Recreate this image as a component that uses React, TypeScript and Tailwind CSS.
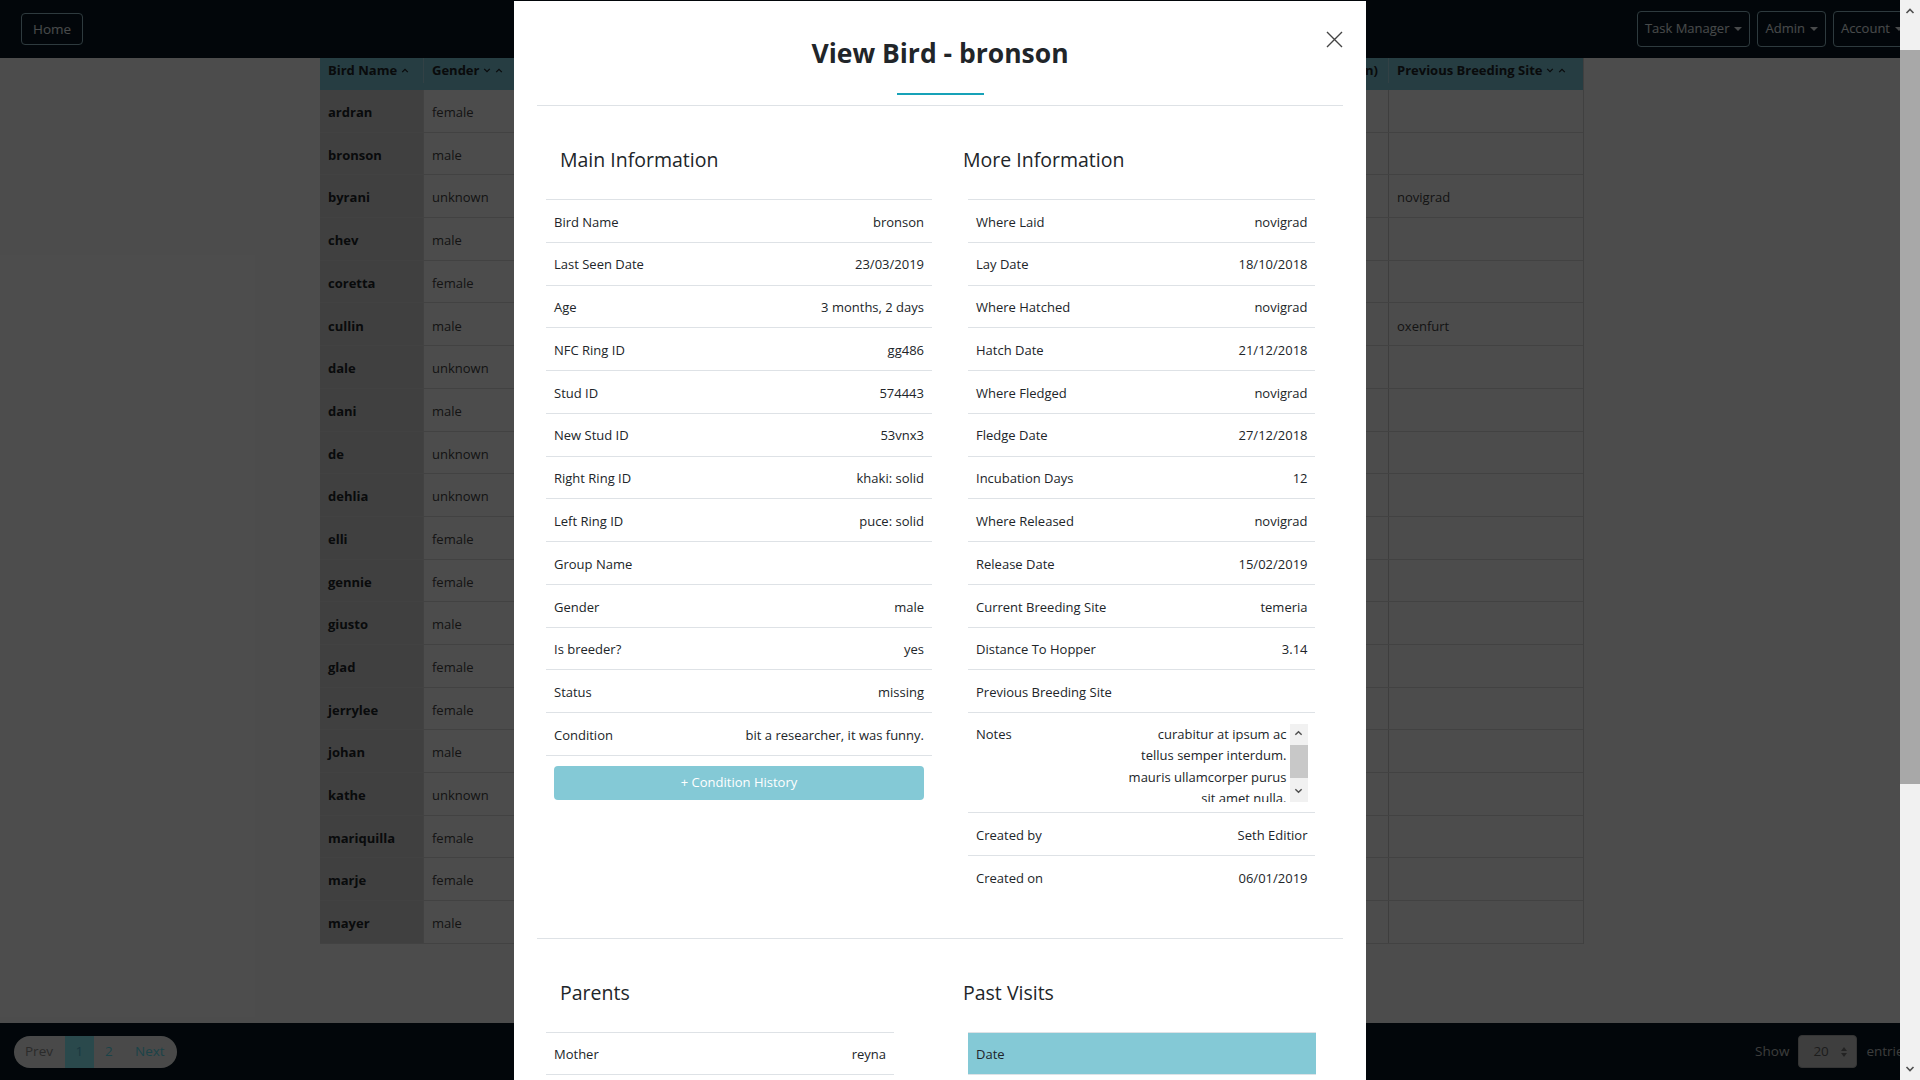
import React from 'react';

const birds: [string, string, string][] = [
  ['ardran', 'female', ''],
  ['bronson', 'male', ''],
  ['byrani', 'unknown', 'novigrad'],
  ['chev', 'male', ''],
  ['coretta', 'female', ''],
  ['cullin', 'male', 'oxenfurt'],
  ['dale', 'unknown', ''],
  ['dani', 'male', ''],
  ['de', 'unknown', ''],
  ['dehlia', 'unknown', ''],
  ['elli', 'female', ''],
  ['gennie', 'female', ''],
  ['giusto', 'male', ''],
  ['glad', 'female', ''],
  ['jerrylee', 'female', ''],
  ['johan', 'male', ''],
  ['kathe', 'unknown', ''],
  ['mariquilla', 'female', ''],
  ['marje', 'female', ''],
  ['mayer', 'male', ''],
];

const mainInfo: [string, string][] = [
  ['Bird Name', 'bronson'],
  ['Last Seen Date', '23/03/2019'],
  ['Age', '3 months, 2 days'],
  ['NFC Ring ID', 'gg486'],
  ['Stud ID', '574443'],
  ['New Stud ID', '53vnx3'],
  ['Right Ring ID', 'khaki: solid'],
  ['Left Ring ID', 'puce: solid'],
  ['Group Name', ''],
  ['Gender', 'male'],
  ['Is breeder?', 'yes'],
  ['Status', 'missing'],
  ['Condition', 'bit a researcher, it was funny.'],
];

const moreInfo: [string, string][] = [
  ['Where Laid', 'novigrad'],
  ['Lay Date', '18/10/2018'],
  ['Where Hatched', 'novigrad'],
  ['Hatch Date', '21/12/2018'],
  ['Where Fledged', 'novigrad'],
  ['Fledge Date', '27/12/2018'],
  ['Incubation Days', '12'],
  ['Where Released', 'novigrad'],
  ['Release Date', '15/02/2019'],
  ['Current Breeding Site', 'temeria'],
  ['Distance To Hopper', '3.14'],
  ['Previous Breeding Site', ''],
];

function Up({ className = '' }: { className?: string }) {
  return (
    <svg viewBox="0 0 10 6" className={className} fill="none" stroke="currentColor" strokeWidth="1.6">
      <path d="M1.5 5 L5 1.5 L8.5 5" />
    </svg>
  );
}

function Down({ className = '' }: { className?: string }) {
  return (
    <svg viewBox="0 0 10 6" className={className} fill="none" stroke="currentColor" strokeWidth="1.6">
      <path d="M1.5 1 L5 4.5 L8.5 1" />
    </svg>
  );
}

function Caret() {
  return <span className="ml-[5px] inline-block h-0 w-0 border-x-[4px] border-t-[4px] border-x-transparent border-t-current" />;
}

function NavButton({ label }: { label: string }) {
  return (
    <button className="flex h-[36px] items-center rounded-[4px] border border-[#9cc3cf] px-[7px] text-[13px] text-[#f2f8fa]">
      {label}
      <Caret />
    </button>
  );
}

export default function App() {
  return (
    <div className="flex h-[1080px] w-[1920px] overflow-hidden bg-white font-['Open_Sans','Noto_Sans',sans-serif] text-[13px] text-[#212529]">
      <div className="relative flex h-full flex-1 flex-col overflow-hidden">
        {/* navbar */}
        <nav className="flex h-[58px] shrink-0 items-center bg-[#071722] pl-[21px]">
          <button className="h-[32px] rounded-[4px] border border-[#9cc3cf] px-[11px] text-[13.5px] text-[#f2f8fa]">Home</button>
          <div className="mr-[-11px] ml-auto flex gap-[7px]">
            <NavButton label="Task Manager" />
            <NavButton label="Admin" />
            <NavButton label="Account" />
          </div>
        </nav>

        {/* birds table */}
        <main className="flex-1 pl-[320px]">
          <div className="w-[1264px] border-r border-[#d8d8d8]">
            <div className="grid h-[32px] grid-cols-[103px_110px_685px_170px_196px] bg-[#80cbdc] pb-[7px] font-bold">
              <div className="flex items-center gap-[4px] px-2">
                Bird Name <Up className="h-[5px] w-[8px]" />
              </div>
              <div className="flex items-center gap-[4px] border-l border-[#a9dbe6] px-2">
                Gender <Down className="h-[5px] w-[8px]" /> <Up className="h-[5px] w-[8px]" />
              </div>
              <div className="flex items-center border-l border-[#a9dbe6] px-2">Status</div>
              <div className="flex items-center justify-end border-l border-[#a9dbe6] pr-[10px]">Release Site (region)</div>
              <div className="flex items-center gap-[4px] border-l border-[#a9dbe6] px-2">
                Previous Breeding Site <Down className="h-[5px] w-[8px]" /> <Up className="h-[5px] w-[8px]" />
              </div>
            </div>
            {birds.map(([name, gender, prev]) => (
              <div key={name} className="grid h-[42.7px] grid-cols-[103px_110px_685px_170px_196px] border-b border-[#dcdcdc]">
                <div className="flex items-center bg-[#d6d6d6] px-2 pt-[4px] font-bold">{name}</div>
                <div className="flex items-center border-l border-[#dcdcdc] px-2 pt-[4px] text-[#444]">{gender}</div>
                <div className="border-l border-[#dcdcdc]" />
                <div className="border-l border-[#dcdcdc]" />
                <div className="flex items-center border-l border-[#d0d0d0] px-2 pt-[4px] text-[#444]">{prev}</div>
              </div>
            ))}
          </div>
        </main>

        {/* footer */}
        <footer className="flex h-[57px] shrink-0 items-center bg-[#071722] pl-[14px]">
          <div className="flex h-[32px] items-center overflow-hidden rounded-full bg-[#f5f5f5] text-[13.5px]">
            <span className="pr-[12px] pl-[11px] text-[#8f8f8f]">Prev</span>
            <span className="flex h-full w-[29px] items-center justify-center bg-[#8ef4ff] text-[#58bbd5]">1</span>
            <span className="flex h-full w-[30px] items-center justify-center text-[#5ee0f0]">2</span>
            <span className="pr-[12px] pl-[11px] text-[#5ee0f0]">Next</span>
          </div>
          <div className="mr-[-10px] ml-auto flex items-center text-[13.5px] text-[#c8c8c8]">
            <span>Show</span>
            <div className="mx-[9px] flex h-[33px] w-[59px] items-center justify-between rounded-[4px] border border-[#b0b0b0] bg-[#d0d0d0] pr-[9px] pl-[14px] text-[#626262]">
              20
              <span className="flex flex-col gap-[2px]">
                <span className="h-0 w-0 border-x-[3.5px] border-b-[4px] border-x-transparent border-b-[#777]" />
                <span className="h-0 w-0 border-x-[3.5px] border-t-[4px] border-x-transparent border-t-[#777]" />
              </span>
            </div>
            <span>entries</span>
          </div>
        </footer>

        {/* backdrop */}
        <div className="absolute inset-0 bg-black/70" />

        {/* modal */}
        <div className="absolute top-[1px] left-[514px] h-[1079px] w-[852px] overflow-hidden bg-white px-[23px]">
          <div className="relative border-b border-[#dee2e6] pb-[10px]">
            <h2 className="pt-[34px] text-center text-[26.5px] leading-[36px] font-bold text-[#212529]">View Bird - bronson</h2>
            <div className="mx-auto mt-[22px] h-[2px] w-[87px] bg-[#17a2b8]" />
            <button className="absolute top-[30px] right-0 text-[#444]">
              <svg width="17" height="17" viewBox="0 0 17 17" stroke="currentColor" strokeWidth="1.4" fill="none">
                <path d="M1 1 L16 16 M16 1 L1 16" />
              </svg>
            </button>
          </div>

          <div className="grid grid-cols-2 border-b border-[#dee2e6] pb-[40px]">
            <div className="pt-[41px]">
              <h3 className="pl-[23px] text-[19.5px] leading-[26px]">Main Information</h3>
              <div className="mt-[26px] mr-[8px] ml-[9px] border-b border-[#dee2e6]">
                {mainInfo.map(([label, value]) => (
                  <div key={label} className="flex h-[42.77px] items-center justify-between border-t border-[#dee2e6] pt-[3px] pr-[8px] pl-2">
                    <span>{label}</span>
                    <span>{value}</span>
                  </div>
                ))}
              </div>
              <button className="mt-[10px] ml-[17px] h-[34px] w-[370px] rounded-[4px] bg-[#84c9d6] text-[13px] text-white">
                + Condition History
              </button>
            </div>

            <div className="pt-[41px]">
              <h3 className="pl-[23px] text-[19.5px] leading-[26px]">More Information</h3>
              <div className="mt-[26px] mr-[28px] ml-[28px]">
                {moreInfo.map(([label, value]) => (
                  <div key={label} className="flex h-[42.77px] items-center justify-between border-t border-[#dee2e6] pt-[3px] pr-[7.5px] pl-2">
                    <span>{label}</span>
                    <span>{value}</span>
                  </div>
                ))}
                <div className="flex h-[100px] items-start justify-between border-t border-[#dee2e6] pt-[11px] pr-[7.5px] pl-2">
                  <span className="leading-[21px]">Notes</span>
                  <div className="flex h-[78px]">
                    <div className="overflow-hidden pr-[3px] text-right leading-[21.3px] whitespace-nowrap">
                      <div>curabitur at ipsum ac</div>
                      <div>tellus semper interdum.</div>
                      <div>mauris ullamcorper purus</div>
                      <div>sit amet nulla.</div>
                    </div>
                    <div className="flex w-[18px] flex-col items-center bg-[#f1f1f1]">
                      <Up className="mt-[6px] h-[6px] w-[9px] text-[#505050]" />
                      <div className="mt-[9px] h-[33px] w-full bg-[#c8c8c8]" />
                      <div className="flex-1" />
                      <Down className="mb-[8px] h-[6px] w-[9px] text-[#505050]" />
                    </div>
                  </div>
                </div>
                <div className="flex h-[42.77px] items-center justify-between border-t border-[#dee2e6] pt-[3px] pr-[7.5px] pl-2">
                  <span>Created by</span>
                  <span>Seth Editior</span>
                </div>
                <div className="flex h-[42.77px] items-center justify-between border-t border-[#dee2e6] pt-[3px] pr-[7.5px] pl-2">
                  <span>Created on</span>
                  <span>06/01/2019</span>
                </div>
              </div>
            </div>
          </div>

          <div className="grid grid-cols-2">
            <div className="pt-[41px]">
              <h3 className="pl-[23px] text-[19.5px] leading-[26px]">Parents</h3>
              <div className="mt-[26px] ml-[9px] w-[348px] border-y border-[#dee2e6]">
                <div className="flex h-[41px] items-center justify-between pt-[3px] pr-[8px] pl-2">
                  <span>Mother</span>
                  <span>reyna</span>
                </div>
              </div>
            </div>
            <div className="pt-[41px]">
              <h3 className="pl-[23px] text-[19.5px] leading-[26px]">Past Visits</h3>
              <div className="mt-[26px] ml-[28px] w-[348px] border-y border-[#dee2e6] bg-[#84c9d6]">
                <div className="flex h-[41px] items-center pt-[3px] pl-2">Date</div>
              </div>
            </div>
          </div>
        </div>
      </div>

      {/* page scrollbar */}
      <div className="flex h-full w-[20px] shrink-0 flex-col items-center bg-[#f1f1f1]">
        <Up className="mt-[8px] h-[6px] w-[10px] text-[#505050]" />
        <div className="mt-[36px] h-[734px] w-full bg-[#a8a8a8]" />
        <div className="flex-1" />
        <Down className="mb-[8px] h-[6px] w-[10px] text-[#505050]" />
      </div>
    </div>
  );
}
